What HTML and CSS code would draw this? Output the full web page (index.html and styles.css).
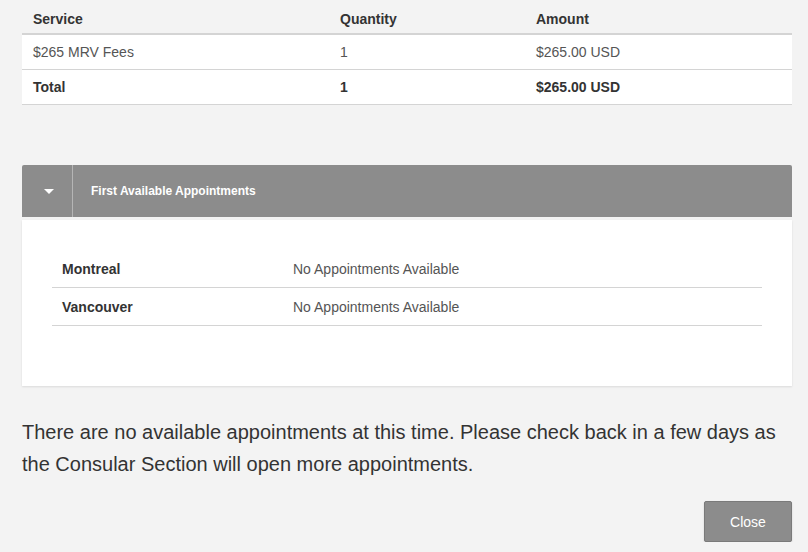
FILE: index.html
```html
<!DOCTYPE html>
<html lang="en">
  <head>
    <meta charset="UTF-8" />
    <title>Payment Summary</title>
    <link rel="stylesheet" href="styles.css">
  </head>
  <body>
    <div class="modal">
      <table class="fees">
        <thead>
          <tr>
            <th class="col-service">Service</th>
            <th class="col-qty">Quantity</th>
            <th>Amount</th>
          </tr>
        </thead>
        <tbody>
          <tr>
            <td>$265 MRV Fees</td>
            <td>1</td>
            <td>$265.00 USD</td>
          </tr>
          <tr class="total">
            <td>Total</td>
            <td>1</td>
            <td>$265.00 USD</td>
          </tr>
        </tbody>
      </table>

      <div class="panel">
        <div class="panel-heading">
          <div class="toggle">
            <svg width="10" height="6" viewBox="0 0 10 6"><path d="M0 0h10L5 5z" fill="#fff"/></svg>
          </div>
          <div class="panel-title">First Available Appointments</div>
        </div>
        <div class="panel-body">
          <table class="appointments">
            <tr>
              <td class="city">Montreal</td>
              <td>No Appointments Available</td>
            </tr>
            <tr>
              <td class="city">Vancouver</td>
              <td>No Appointments Available</td>
            </tr>
          </table>
        </div>
      </div>

      <p class="notice">There are no available appointments at this time. Please check back in a few days as the Consular Section will open more appointments.</p>

      <div class="actions">
        <button class="btn-close">Close</button>
      </div>
    </div>
  </body>
</html>
```

FILE: styles.css
```css
body {
  font-family: "Liberation Sans", Arial, sans-serif;
  margin: 0;
  padding: 0;
  background: #f3f3f3;
  color: #333;
}

.modal {
  padding: 0 16px 0 22px;
}

.fees {
  width: 770px;
  border-collapse: collapse;
  font-size: 14px;
}

.fees th {
  text-align: left;
  font-weight: bold;
  color: #333;
  height: 29px;
  padding: 4px 11px 0;
  border-bottom: 2px solid #d4d4d4;
}

.fees td {
  background: #fff;
  color: #555;
  height: 34px;
  padding: 0 11px;
  border-bottom: 1px solid #d4d4d4;
}

.fees .col-service {
  width: 285px;
}

.fees .col-qty {
  width: 174px;
}

.fees .total td {
  font-weight: bold;
  color: #333;
}

.panel {
  width: 770px;
  margin-top: 60px;
}

.panel-heading {
  display: flex;
  height: 52px;
  background: #8c8c8c;
  border-radius: 2px 2px 0 0;
  color: #fff;
}

.toggle {
  width: 50px;
  border-right: 1px solid #b5b5b5;
  display: flex;
  align-items: center;
  justify-content: center;
}

.toggle svg {
  margin: 1px 0 0 4px;
}

.panel-title {
  display: flex;
  align-items: center;
  padding-left: 18px;
  font-size: 12px;
  font-weight: bold;
}

.panel-body {
  margin-top: 3px;
  background: #fff;
  padding: 30px 30px 60px;
  box-shadow: 0 1px 2px rgba(0, 0, 0, 0.1);
}

.appointments {
  width: 100%;
  border-collapse: collapse;
  font-size: 14px;
}

.appointments td {
  height: 37px;
  padding: 0 10px;
  border-bottom: 1px solid #d4d4d4;
  color: #555;
}

.appointments .city {
  width: 211px;
  font-weight: bold;
  color: #333;
}

.notice {
  width: 770px;
  margin: 30px 0 0;
  font-size: 20px;
  line-height: 32px;
  color: #333;
}

.actions {
  display: flex;
  justify-content: flex-end;
  width: 770px;
  margin-top: 21px;
}

.btn-close {
  width: 88px;
  height: 41px;
  background: #8c8c8c;
  border: 1px solid #7a7a7a;
  border-radius: 2px;
  color: #fff;
  font-family: "Liberation Sans", Arial, sans-serif;
  font-size: 14px;
  box-shadow: 0 1px 2px rgba(0, 0, 0, 0.15);
}
```
